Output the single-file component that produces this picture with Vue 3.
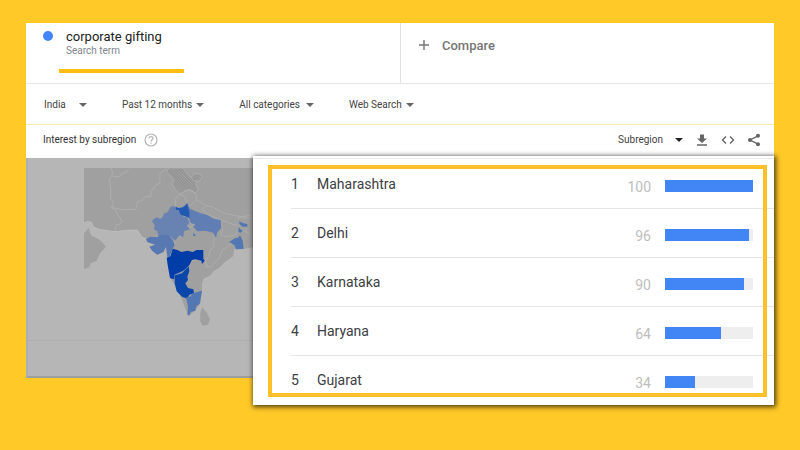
<template>
  <main class="page">
    <section class="card">
      <div class="terms">
        <div class="term">
          <span class="dot"></span>
          <div class="term-text">
            <h1>corporate gifting</h1>
            <p>Search term</p>
          </div>
        </div>
        <button type="button" class="compare">
          <svg width="10" height="10" viewBox="0 0 10 10"><path d="M5 0v10M0 5h10" /></svg>
          <span>Compare</span>
        </button>
      </div>

      <div class="filters">
        <div v-for="filter in filters" :key="filter.id" class="picker" :class="filter.id">
          <select :id="filter.id" v-model="filter.value" :aria-label="filter.label">
            <option v-for="option in filter.options" :key="option">{{ option }}</option>
          </select>
          <svg class="arrow" width="8" height="4" viewBox="0 0 8 4"><path d="M0 0h8L4 4z" /></svg>
        </div>
      </div>

      <header class="section-head">
        <h2>Interest by subregion</h2>
        <button type="button" class="icon help" aria-label="Help">
          <svg width="14" height="14" viewBox="0 0 14 14">
            <circle cx="7" cy="7" r="6" />
            <path d="M5 5.600C5 4.300 5.800 3.600 7 3.600s2 .7 2 1.800C9 6.800 7 6.900 7 8.400M7 9.500v1.300" />
          </svg>
        </button>
        <div class="tools">
          <div class="picker resolution">
            <select id="resolution" v-model="resolution" aria-label="Resolution">
              <option>Subregion</option>
              <option>City</option>
            </select>
            <svg class="arrow" width="8" height="4" viewBox="0 0 8 4"><path d="M0 0h8L4 4z" /></svg>
          </div>
          <button type="button" class="icon" aria-label="Download">
            <svg width="14" height="14" viewBox="0 0 14 14">
              <path class="fill" d="M5 1.500h4v4h3L7 10 2 5.500h3zM2 11.200h10v1.500H2z" />
            </svg>
          </button>
          <button type="button" class="icon" aria-label="Embed">
            <svg width="14" height="14" viewBox="0 0 14 14">
              <path class="line" d="M5 3.500L1.500 7 5 10.500M9 3.500L12.500 7 9 10.500" />
            </svg>
          </button>
          <button type="button" class="icon" aria-label="Share">
            <svg width="14" height="14" viewBox="0 0 14 14">
              <path class="line" d="M11 2.800L3 7l8 4.200" />
              <circle class="fill" cx="11" cy="2.800" r="2" />
              <circle class="fill" cx="3" cy="7" r="2" />
              <circle class="fill" cx="11" cy="11.200" r="2" />
            </svg>
          </button>
        </div>
      </header>

      <div class="map-area">
        <svg class="map" width="176" height="160" viewBox="192 54 528 480" role="img" aria-label="Map of India">
          <defs>
            <pattern id="hatch" width="6" height="6" patternUnits="userSpaceOnUse" patternTransform="rotate(-45)">
              <rect width="6" height="6" fill="#a0a0a0" />
              <rect width="2" height="6" fill="#888" />
            </pattern>
          </defs>
          <!-- mainland and neighbours -->
          <path class="land" d="M192 54H720V285L690 293 668 297 642 298 640 318 612 338 600 352 580 364 572 376 550 386 546 402 546 424 540 462 526 482 508 496 498 480 488 456 478 432 464 404 450 384 444 350 440 318 438 292 430 306 412 314 398 304 388 290 406 284 388 279 378 266 366 262 352 240 320 241 285 245 240 239 220 231 215 215 192 218z" />
          <path class="land" d="M192 250L206 234 213 256 240 270 258 290 240 310 230 332 212 340 208 352 192 358z" />
          <path class="land" d="M546 472L560 488 570 508 564 524 548 527 541 514 541 490z" />
          <path class="hatched" d="M440 66L446 54H490L500 72 514 84 530 90 528 106 536 120 524 128 508 120 494 124 480 132 466 118 456 102 462 88z" />
          <path class="hatched" d="M514 80L526 70 540 72 546 82 536 94 520 92z" />
          <!-- country and state borders -->
          <path class="border" d="M273 54L279 70 268 90 272 120 272 145 282 160 274 174 288 180 290 190 306 212 300 222 288 226 285 245M274 172L306 179 348 178 352 156 366 152 374 140 392 140 394 124 408 104 420 100 420 70 438 56M279 80L298 80 306 70 318 68 326 58M466 168L466 148 478 134 492 138 500 154 503 164M492 124L510 118 528 132 530 150 520 158 510 170M530 150L556 166 580 172 608 188 640 196 664 200 690 197M556 166L546 178 564 194 600 208 640 224 660 226M602 216L608 242 600 254 618 260 644 256 660 238M586 262L578 278 582 290 570 300 566 320 556 332 560 352 576 348 588 334 600 320 606 300 622 290 636 280M466 286L462 278 478 262 492 254M498 240L510 234 520 222 528 230M522 246L524 258M508 348L516 332 534 328 548 338M482 440L490 464 498 484M650 204H696M668 242L690 252" />
          <path class="coast" d="M192 218L206 214 215 218 220 231 240 239 285 245 320 241 352 240 366 262 378 266" />
          <!-- states with data -->
          <path fill="#6882b1" d="M396 214L402 206 412 202 418 206 426 204 434 188 440 188 446 182 450 172 458 168 466 170 470 178 482 184 490 200 502 202 508 218 500 228 510 238 492 244 490 262 478 256 466 272 452 260 436 256 416 260 412 244 402 238 404 226z" />
          <path fill="#5778b1" d="M378 268L390 260 412 262 422 254 446 256 458 270 464 284 456 300 450 318 443 322 438 290 430 306 412 314 398 304 388 290 406 284 382 276z" />
          <path fill="#607eb3" d="M504 164L510 176 524 182 542 190 564 196 580 206 602 210 604 234 592 246 588 264 580 248 556 242 532 244 520 230 526 224 512 218 506 202z" />
          <path fill="#225ab1" d="M467 170L476 174 488 172 496 166 502 158 504 170 508 186 508 204 500 200 482 194 476 180 468 180z" />
          <path fill="#003da8" d="M458 296L472 300 484 306 502 302 518 306 530 300 550 300 550 326 554 332 546 342 544 332 526 328 516 330 508 346 494 360 482 366 464 374 462 388 450 384 444 350 440 324 452 318z" />
          <path fill="#0b46aa" d="M464 376L486 370 506 348 508 364 502 380 504 390 496 400 504 414 520 418 522 430 508 434 502 446 486 440 470 424 464 400z" />
          <path class="state-line" d="M464 375L484 368 494 360 508 347" />
          <path fill="#5377b2" d="M498 442L510 440 518 430 546 422 542 446 540 460 528 470 526 482 512 486 508 497 502 494 504 470z" />
          <path fill="#5377b2" d="M628 276L642 266 656 262 660 256 668 272 671 296 648 298 644 286zM658 214L670 220 682 222 682 230 668 230 658 222zM656 232L662 238 668 242 662 248 655 246zM520 246L528 258 520 258z" />
        </svg>
      </div>
    </section>

    <section class="ranking">
      <table>
        <tbody>
          <tr v-for="(region, index) in regions" :key="region.name">
            <td class="rank">{{ index + 1 }}</td>
            <th scope="row">{{ region.name }}</th>
            <td class="value">{{ region.value }}</td>
            <td class="meter">
              <div class="track"><div class="bar" :style="{ width: region.value + '%' }"></div></div>
            </td>
          </tr>
        </tbody>
      </table>
    </section>
  </main>
</template>

<script setup>
import { ref } from 'vue';

const resolution = ref('Subregion');

const filters = ref([
  { id: 'country', label: 'Country', value: 'India', options: ['India', 'Worldwide'] },
  { id: 'period', label: 'Period', value: 'Past 12 months', options: ['Past 12 months', 'Past 5 years'] },
  { id: 'category', label: 'Category', value: 'All categories', options: ['All categories', 'Shopping'] },
  { id: 'property', label: 'Search type', value: 'Web Search', options: ['Web Search', 'Image Search'] }
]);

const regions = [
  { name: 'Maharashtra', value: 100 },
  { name: 'Delhi', value: 96 },
  { name: 'Karnataka', value: 90 },
  { name: 'Haryana', value: 64 },
  { name: 'Gujarat', value: 34 }
];
</script>

<style>
body {
  margin: 0;
  background: #ffc928;
}
</style>

<style scoped>
.page {
  position: relative;
  margin: 23px 26px 45px;
  font-family: Roboto, "Liberation Sans", sans-serif;
  color: #3c4043;
}

.card {
  background: #fff;
}

h1, h2, p {
  margin: 0;
  font-weight: 400;
}

button {
  padding: 0;
  border: 0;
  background: none;
  font-family: inherit;
  cursor: pointer;
}

svg {
  display: block;
}

.terms {
  display: grid;
  grid-template-columns: 1fr 1fr;
  height: 60px;
  border-bottom: 1px solid #e6e6e6;
}

.term {
  display: flex;
  gap: 13px;
  padding: 5px 17px;
}

.dot {
  width: 10px;
  height: 10px;
  margin-top: 3px;
  border-radius: 50%;
  background: #4285f4;
}

.term-text {
  position: relative;
}

/* marker stroke under the term */
.term-text::after {
  content: "";
  position: absolute;
  top: 41px;
  left: -7px;
  width: 125px;
  height: 4px;
  background: #fdbd15;
}

.term h1 {
  font-size: 13px;
  line-height: 17px;
  color: #212121;
}

.term p {
  font-size: 10px;
  line-height: 12px;
  color: #80868b;
}

.compare {
  display: flex;
  align-items: center;
  gap: 13px;
  padding: 0 18px 16px;
  border-left: 1px solid #e2e2e2;
  font-size: 13px;
  line-height: 17px;
  font-weight: 500;
  color: #757575;
}

.compare path {
  fill: none;
  stroke: #757575;
  stroke-width: 1.4;
}

.filters {
  display: flex;
  align-items: center;
  gap: 35px;
  height: 38px;
  padding: 2px 18px 0;
  border-bottom: 1px solid #fae8a8;
}

.picker {
  display: flex;
  align-items: center;
  justify-content: space-between;
  gap: 4px;
}

.country {
  min-width: 43px;
}

.category {
  gap: 6px;
}

.resolution {
  gap: 12px;
}

select {
  appearance: none;
  field-sizing: content;
  margin: 0;
  padding: 0;
  border: 0;
  background: none;
  font-family: inherit;
  font-size: 10px;
  line-height: 14px;
  color: #444;
}

.arrow {
  fill: #666;
  pointer-events: none;
}

.resolution .arrow {
  fill: #222;
}

.section-head {
  display: flex;
  align-items: center;
  height: 30px;
  padding: 0 13px 3px 17px;
}

.section-head h2 {
  font-size: 10px;
  line-height: 14px;
  color: #333;
}

.help {
  margin-left: 8px;
}

.help circle,
.help path {
  fill: none;
  stroke: #b5b5b5;
  stroke-width: 1.2;
}

.tools {
  display: flex;
  align-items: center;
  gap: 12px;
  margin-left: auto;
}

.icon .fill {
  fill: #666;
}

.icon .line {
  fill: none;
  stroke: #666;
  stroke-width: 1.4;
}

.map-area {
  box-sizing: border-box;
  height: 220px;
  padding: 10px 0 0 56px;
  border-left: 2px solid #acaeb2;
  border-bottom: 2px solid #9e9e9e;
  background: linear-gradient(#adadad, #adadad) 0 182px / 100% 1px no-repeat #b6b6b6;
}

.land {
  fill: #a0a0a0;
}

.hatched {
  fill: url(#hatch);
  stroke: #b2b2b2;
  stroke-width: 2;
}

.border {
  fill: none;
  stroke: #b4b4b4;
  stroke-width: 2;
}

.coast {
  fill: none;
  stroke: #bdbdbd;
  stroke-width: 3;
}

.state-line {
  fill: none;
  stroke: #6f8fc4;
  stroke-width: 2;
}

/* zoomed list laid over the report */
.ranking {
  position: absolute;
  top: 133px;
  left: 227px;
  right: 0;
  padding-top: 4px;
  background: linear-gradient(#e8e8e8, #e8e8e8) 0 2px / 100% 1px no-repeat #fff;
  box-shadow: 1px 1px 5px 1px rgba(0, 0, 0, .7);
}

.ranking::after {
  content: "";
  position: absolute;
  inset: 9px 7px 8px 15px;
  border: 4px solid #fdc029;
}

table {
  width: calc(100% - 38px);
  margin-left: 38px;
  border-spacing: 0;
  font-size: 14px;
  line-height: 18px;
}

tr {
  height: 49px;
}

th,
td {
  box-sizing: border-box;
  height: 49px;
  padding: 0;
  border-bottom: 1px solid #e4e4e4;
}

tr:last-child > * {
  border-bottom-color: transparent;
}

th {
  font-weight: 400;
  text-align: left;
}

.rank {
  width: 26px;
}

.value {
  padding-top: 6px;
  text-align: right;
  color: #bdbdbd;
}

.meter {
  width: 123px;
  padding: 4px 21px 0 14px;
}

.track {
  height: 12px;
  background: #eee;
}

.bar {
  height: 100%;
  background: #4285f4;
}
</style>
